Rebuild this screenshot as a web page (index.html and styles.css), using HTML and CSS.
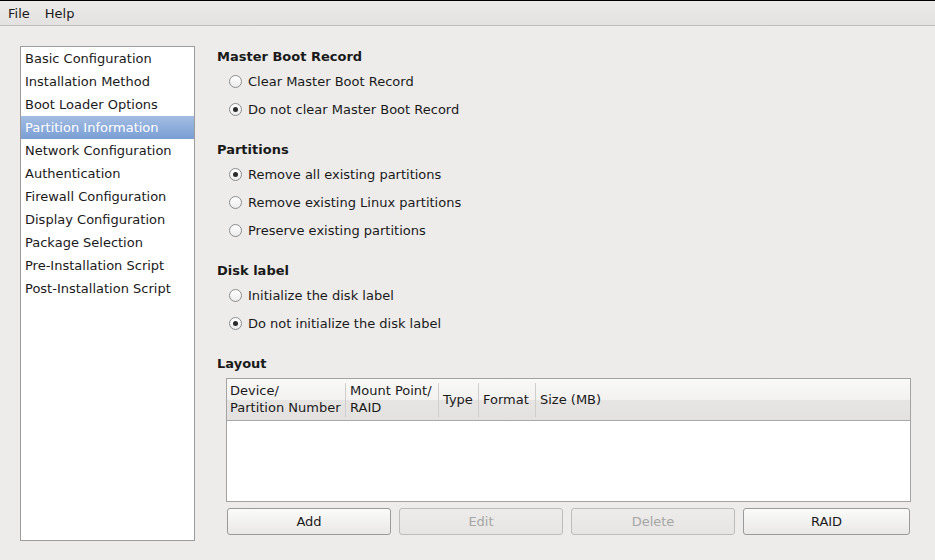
FILE: index.html
```html
<!DOCTYPE html>
<html>
<head>
<meta charset="utf-8">
<link rel="stylesheet" href="styles.css">
</head>
<body>
<div class="menubar">
  <span class="menu">File</span>
  <span class="menu">Help</span>
</div>
<div class="main">
  <ul class="nav">
    <li>Basic Configuration</li>
    <li>Installation Method</li>
    <li>Boot Loader Options</li>
    <li class="sel">Partition Information</li>
    <li>Network Configuration</li>
    <li>Authentication</li>
    <li>Firewall Configuration</li>
    <li>Display Configuration</li>
    <li>Package Selection</li>
    <li>Pre-Installation Script</li>
    <li>Post-Installation Script</li>
  </ul>
  <div class="content">
    <div class="group">
      <div class="heading">Master Boot Record</div>
      <div class="radio"><span class="rb"></span>Clear Master Boot Record</div>
      <div class="radio"><span class="rb on"></span>Do not clear Master Boot Record</div>
    </div>
    <div class="group">
      <div class="heading">Partitions</div>
      <div class="radio"><span class="rb on"></span>Remove all existing partitions</div>
      <div class="radio"><span class="rb"></span>Remove existing Linux partitions</div>
      <div class="radio"><span class="rb"></span>Preserve existing partitions</div>
    </div>
    <div class="group">
      <div class="heading">Disk label</div>
      <div class="radio"><span class="rb"></span>Initialize the disk label</div>
      <div class="radio"><span class="rb on"></span>Do not initialize the disk label</div>
    </div>
    <div class="heading layout-h">Layout</div>
    <div class="table">
      <div class="thead">
        <div class="th c1">Device/<br>Partition Number</div>
        <div class="th c2">Mount Point/<br>RAID</div>
        <div class="th c3">Type</div>
        <div class="th c4">Format</div>
        <div class="th c5">Size (MB)</div>
      </div>
      <div class="tbody"></div>
    </div>
    <div class="buttons">
      <button class="btn">Add</button>
      <button class="btn" disabled>Edit</button>
      <button class="btn" disabled>Delete</button>
      <button class="btn wide">RAID</button>
    </div>
  </div>
</div>
</body>
</html>
```
FILE: styles.css
```css
html, body {
  margin: 0;
  padding: 0;
}
body {
  width: 935px;
  height: 560px;
  overflow: hidden;
  background: #edeceb;
  font-family: "DejaVu Sans", sans-serif;
  font-size: 13px;
  color: #1a1a1a;
}
.menubar {
  border-top: 1px solid #000;
  border-bottom: 1px solid #c0bfbd;
  height: 24px;
  background: linear-gradient(#ecebe9, #e3e2e0);
  display: flex;
  align-items: center;
  padding-left: 8px;
  gap: 15px;
  box-sizing: content-box;
}
.menu {
  line-height: 17px;
}
.main {
  display: flex;
  padding-left: 20px;
  padding-right: 24px;
}
.nav {
  list-style: none;
  margin: 20px 0 0 0;
  padding: 0;
  width: 173px;
  height: 493px;
  background: #fff;
  border: 1px solid #9c9c9c;
  flex: none;
}
.nav li {
  height: 23px;
  line-height: 23px;
  padding-left: 4px;
  white-space: nowrap;
}
.nav li.sel {
  background: linear-gradient(#a3bde3, #7a9ed4);
  color: #fff;
}
.content {
  flex: 1;
  margin-left: 22px;
  padding-top: 21px;
}
.group {
  margin-bottom: 17px;
}
.heading {
  font-weight: bold;
  line-height: 17px;
  padding-top: 1px;
  margin-bottom: 2px;
}
.radio {
  height: 28px;
  display: flex;
  align-items: center;
  padding-left: 12px;
}
.rb {
  width: 11px;
  height: 11px;
  border: 1px solid #8c8c8c;
  border-radius: 50%;
  background: linear-gradient(#ffffff, #ececec);
  margin-right: 6px;
  position: relative;
  flex: none;
}
.rb.on::after {
  content: "";
  position: absolute;
  left: 3px;
  top: 3px;
  width: 5px;
  height: 5px;
  border-radius: 50%;
  background: #2a2a2a;
}
.layout-h {
  margin-bottom: 6px;
}
.table {
  margin-left: 9px;
  border: 1px solid #a3a3a3;
  height: 122px;
  background: #fff;
}
.thead {
  display: flex;
  height: 41px;
  border-bottom: 1px solid #a8a8a8;
  background: linear-gradient(#f9f9f8 0%, #f3f2f1 50%, #e6e5e3 52%, #e3e2e0 100%);
}
.th {
  position: relative;
  padding: 0 4px 1px 3px;
  line-height: 17px;
  display: flex;
  align-items: center;
  box-sizing: border-box;
  white-space: nowrap;
}
.th::after {
  content: "";
  position: absolute;
  right: 0;
  top: 4px;
  bottom: 3px;
  width: 1px;
  background: #cfcecc;
}
.th.c5::after {
  display: none;
}
.c1 { width: 119px; }
.c2 { width: 93px; padding-left: 4px; }
.c3 { width: 40px; padding-left: 4px; }
.c4 { width: 57px; padding-left: 4px; }
.c5 { flex: 1; padding-left: 4px; }
.buttons {
  display: flex;
  gap: 8px;
  margin: 6px 1px 0 10px;
}
.btn {
  flex: none;
  width: 164px;
  height: 27px;
  font-family: "DejaVu Sans", sans-serif;
  font-size: 13px;
  color: #1a1a1a;
  border: 1px solid #9a9a9a;
  border-radius: 3px;
  background: linear-gradient(#fbfbfa, #e9e8e6);
  padding: 0;
}
.btn.wide {
  flex: 1;
}
.btn:disabled {
  color: #a6a6a6;
  border-color: #bdbcba;
  background: linear-gradient(#edecea, #e6e5e3);
}
```
